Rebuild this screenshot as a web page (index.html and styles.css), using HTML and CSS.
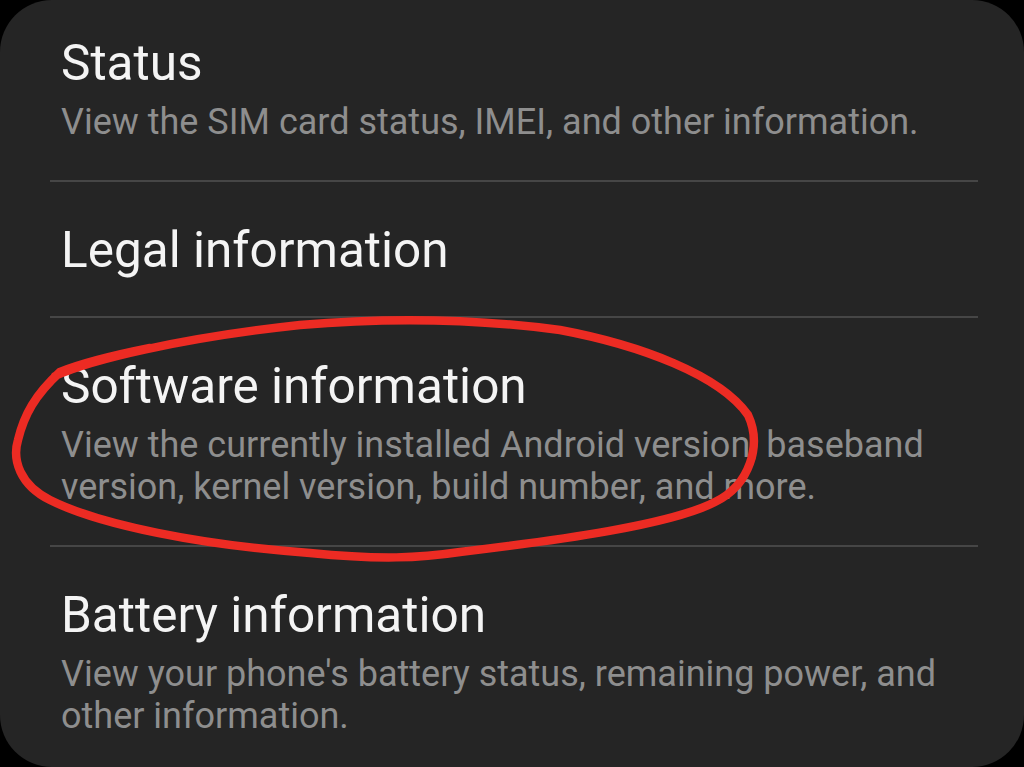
FILE: index.html
```html
<!DOCTYPE html>
<html lang="en">
<head>
  <meta charset="UTF-8" />
  <meta name="viewport" content="width=device-width, initial-scale=1" />
  <title>About phone</title>
  <link rel="stylesheet" href="styles.css">
</head>
<body>

  <div class="card">
    <div class="row first">
      <div class="row-title">Status</div>
      <div class="row-sub">View the SIM card status, IMEI, and other information.</div>
    </div>
    <div class="row">
      <div class="row-title">Legal information</div>
    </div>
    <div class="row">
      <div class="row-title">Software information</div>
      <div class="row-sub">View the currently installed Android version, baseband version, kernel version, build number, and more.</div>
    </div>
    <div class="row last">
      <div class="row-title">Battery information</div>
      <div class="row-sub">View your phone's battery status, remaining power, and other information.</div>
    </div>

    <!-- hand drawn mark around "Software information" -->
    <svg class="scribble" viewBox="0 0 1024 767" width="1024" height="767">
      <path d="M 55 376
               C 90 360, 180 338, 300 325
               C 380 318, 470 318, 560 330
               C 640 345, 720 375, 748 415
               C 762 445, 750 485, 715 502
               C 670 525, 560 540, 460 552
               C 420 558, 380 560, 310 553
               C 200 545, 100 525, 50 500
               C 20 485, 12 460, 18 440
               C 24 415, 35 395, 60 372
               C 85 362, 120 354, 150 348" />
    </svg>
  </div>

</body>
</html>
```

FILE: styles.css
```css
:root {
  --card-bg: #252525;
  --title-color: #f4f4f4;
  --sub-color: #8e8e8e;
  --line-color: #464646;
  --mark-color: #ec2b23;
}
html, body {
  margin: 0;
  background: #000;
}
body {
  font-family: Roboto, "Noto Sans", sans-serif;
}
.card {
  position: relative;
  width: 1024px;
  height: 767px;
  box-sizing: border-box;
  background: var(--card-bg);
  border-radius: 52px;
  overflow: hidden;
  display: flex;
  flex-direction: column;
}
.row {
  margin: 0 46px 0 50px;
  padding: 39px 0 37px 11px;
  border-bottom: 2px solid var(--line-color);
}
.row.first {
  padding-top: 34px;
}
.row.last {
  border-bottom: none;
}
.row-title {
  color: var(--title-color);
  font-size: 49.5px;
  line-height: 58px;
}
.row-sub {
  color: var(--sub-color);
  font-size: 36px;
  line-height: 42px;
  margin-top: 9px;
}
.scribble {
  position: absolute;
  left: 0;
  top: 0;
  pointer-events: none;
}
.scribble path {
  fill: none;
  stroke: var(--mark-color);
  stroke-width: 8.5;
  stroke-linecap: round;
  stroke-linejoin: round;
}
```
